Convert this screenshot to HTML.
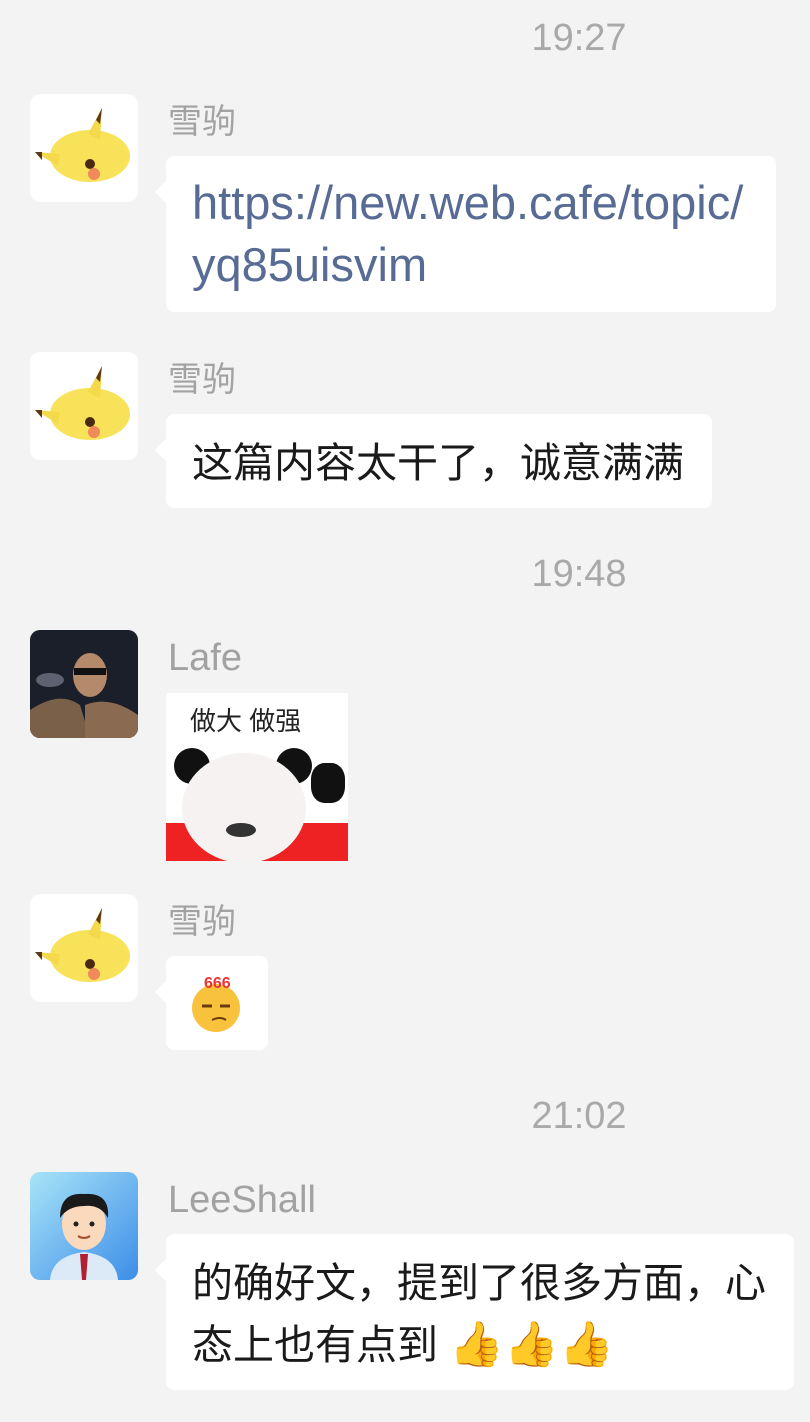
<!DOCTYPE html>
<html><head><meta charset="utf-8"><style>
body{margin:0;width:810px;height:1422px;background:#f3f3f3;position:relative;overflow:hidden;font-family:"Liberation Sans","Noto Sans CJK SC",sans-serif}
.t{position:absolute;left:0;width:1158px;text-align:center;font-size:38px;color:#a9a9a9;line-height:40px}
.av{position:absolute;left:30px;width:108px;height:108px;border-radius:10px;overflow:hidden;background:#fff}
.nm{position:absolute;left:168px;font-size:34px;color:#a2a2a2;line-height:40px}
.nl{font-size:38px}
.b{position:absolute;left:166px;background:#fff;border-radius:8px;font-size:41px;color:#1a1a1a;padding:0 26px;box-sizing:border-box;line-height:62px;white-space:nowrap}
.b:before{content:"";position:absolute;left:-8px;top:28px;width:16px;height:16px;background:#fff;transform:rotate(45deg);border-radius:2px}
</style></head><body>
<div class="t" style="top:18px">19:27</div>
<div class="av" style="top:94px"><svg width="108" height="108"><ellipse cx="60" cy="62" rx="40" ry="26" fill="#f7e25a"/><polygon points="58,40 72,14 70,46" fill="#f4d94a"/><polygon points="66,26 72,14 70,30" fill="#5a3a1a"/><polygon points="30,60 5,58 28,72" fill="#f4d94a"/><polygon points="12,58 5,58 12,66" fill="#5a3a1a"/><circle cx="60" cy="70" r="5" fill="#4a2a10"/><circle cx="64" cy="80" r="6" fill="#f08a5a"/></svg></div>
<div class="nm" style="top:102px">雪驹</div>
<div class="b" style="top:156px;width:610px;height:156px;padding-top:16px;color:#576b95;font-size:47px">https://new.web.cafe/topic/<br>yq85uisvim</div>
<div class="av" style="top:352px"><svg width="108" height="108"><ellipse cx="60" cy="62" rx="40" ry="26" fill="#f7e25a"/><polygon points="58,40 72,14 70,46" fill="#f4d94a"/><polygon points="66,26 72,14 70,30" fill="#5a3a1a"/><polygon points="30,60 5,58 28,72" fill="#f4d94a"/><polygon points="12,58 5,58 12,66" fill="#5a3a1a"/><circle cx="60" cy="70" r="5" fill="#4a2a10"/><circle cx="64" cy="80" r="6" fill="#f08a5a"/></svg></div>
<div class="nm" style="top:360px">雪驹</div>
<div class="b" style="top:414px;width:546px;height:94px;padding-top:18px">这篇内容太干了，诚意满满</div>
<div class="t" style="top:554px">19:48</div>
<div class="av" style="top:630px;background:#1b1f2a"><svg width="108" height="108"><path d="M0 80 Q30 60 50 75 L60 108 L0 108Z" fill="#7a6048"/><path d="M55 75 Q80 65 108 85 L108 108 L55 108Z" fill="#8a6a50"/><ellipse cx="60" cy="45" rx="17" ry="22" fill="#b58a6a"/><rect x="44" y="38" width="32" height="7" fill="#111"/><ellipse cx="20" cy="50" rx="14" ry="7" fill="#8890a0" opacity=".6"/></svg></div>
<div class="nm nl" style="top:638px">Lafe</div>
<div style="position:absolute;left:166px;top:693px;width:182px;height:168px;background:#fff;overflow:hidden">
<div style="position:absolute;left:24px;top:8px;font-size:26px;color:#222">做大 做强</div>
<div style="position:absolute;left:8px;top:55px;width:36px;height:36px;border-radius:50%;background:#111"></div>
<div style="position:absolute;left:110px;top:55px;width:36px;height:36px;border-radius:50%;background:#111"></div>
<div style="position:absolute;left:0;top:130px;width:182px;height:40px;background:#e22"></div>
<div style="position:absolute;left:16px;top:60px;width:124px;height:110px;border-radius:50%;background:#f7f2f2"></div>
<div style="position:absolute;left:145px;top:70px;width:34px;height:40px;border-radius:40%;background:#111"></div>
<div style="position:absolute;left:60px;top:130px;width:30px;height:14px;border-radius:50%;background:#333"></div>
</div>
<div class="av" style="top:894px"><svg width="108" height="108"><ellipse cx="60" cy="62" rx="40" ry="26" fill="#f7e25a"/><polygon points="58,40 72,14 70,46" fill="#f4d94a"/><polygon points="66,26 72,14 70,30" fill="#5a3a1a"/><polygon points="30,60 5,58 28,72" fill="#f4d94a"/><polygon points="12,58 5,58 12,66" fill="#5a3a1a"/><circle cx="60" cy="70" r="5" fill="#4a2a10"/><circle cx="64" cy="80" r="6" fill="#f08a5a"/></svg></div>
<div class="nm" style="top:902px">雪驹</div>
<div class="b" style="top:956px;width:102px;height:94px"><svg width="54" height="60" style="position:absolute;left:24px;top:18px"><circle cx="26" cy="34" r="24" fill="#f9c23c"/><text x="14" y="14" font-size="16" fill="#e33" font-family="Liberation Sans" font-weight="bold">666</text><path d="M12 32 h10 M30 32 h10" stroke="#6a3a10" stroke-width="3"/><path d="M22 46 q8 -4 14 0" stroke="#6a3a10" stroke-width="2" fill="none"/></svg></div>
<div class="t" style="top:1096px">21:02</div>
<div class="av" style="top:1172px;background:linear-gradient(135deg,#a8e4f8,#3c8de8)"><svg width="108" height="108"><path d="M20 108 Q22 84 54 80 Q86 84 88 108Z" fill="#dceaf8"/><path d="M50 82 L58 82 L56 108 L52 108Z" fill="#b02030"/><ellipse cx="54" cy="52" rx="22" ry="26" fill="#fbd9bd"/><path d="M30 46 Q30 20 54 22 Q80 20 78 46 Q70 32 54 34 Q38 34 30 46Z" fill="#1a1a1a"/><circle cx="46" cy="52" r="2.5" fill="#222"/><circle cx="62" cy="52" r="2.5" fill="#222"/><path d="M48 64 q6 4 12 0" stroke="#a05030" stroke-width="2" fill="none"/></svg></div>
<div class="nm nl" style="top:1180px">LeeShall</div>
<div class="b" style="top:1234px;width:628px;height:156px;padding-top:18px">的确好文，提到了很多方面，心<br>态上也有点到 <span style="font-size:44px">👍👍👍</span></div>
</body></html>
